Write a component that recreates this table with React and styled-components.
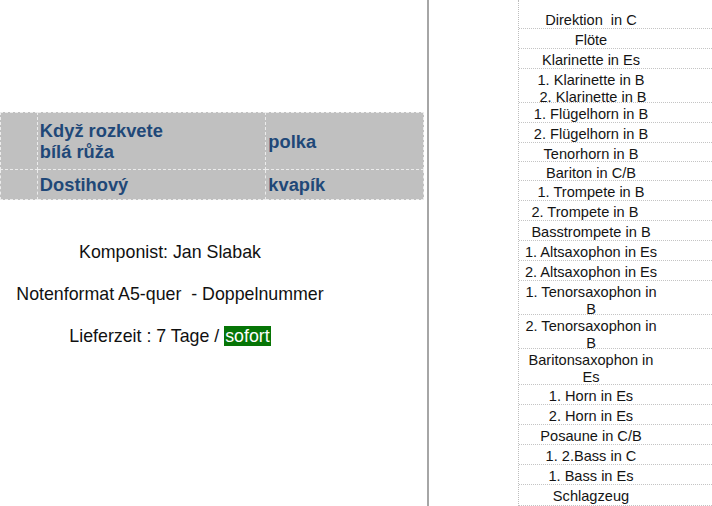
import React from 'react';
import styled, { createGlobalStyle } from 'styled-components';

const Global = createGlobalStyle`
  html, body {
    margin: 0;
    padding: 0;
    background: #fff;
    overflow: hidden;
  }
  body {
    font-family: "Liberation Sans", Arial, sans-serif;
  }
`;

const Page = styled.div`
  display: flex;
  width: 712px;
  height: 506px;
  overflow: hidden;
`;

const LeftPanel = styled.div`
  width: 427px;
  flex-shrink: 0;
  padding-top: 112px;
  box-sizing: border-box;
`;

const Divider = styled.div`
  width: 2px;
  flex-shrink: 0;
  background: #a6a6a6;
`;

const RightPanel = styled.div`
  flex: 1;
  padding-left: 89px;
  box-sizing: border-box;
`;

const SongTable = styled.table`
  width: 424px;
  border-collapse: collapse;
  background: #c0c0c0;
  border: 1px dotted #9a9a9a;
`;

const Cell = styled.td`
  width: ${p => p.w}px;
  height: ${p => p.h}px;
  padding: 0 0 0 2px;
  border: 1px dashed #ececec;
  color: #1f4878;
  font-weight: bold;
  font-size: 18.3px;
  line-height: 21px;
  vertical-align: middle;
  box-sizing: border-box;
`;

const Info = styled.div`
  width: 340px;
  text-align: center;
  padding-top: 42px;
`;

const Line = styled.p`
  margin: 0 0 21px;
  font-size: 17.8px;
  line-height: 21px;
  color: #111;
`;

const Badge = styled.span`
  background: #067506;
  color: #fff;
  padding: 0 1px;
`;

const PartList = styled.div`
  border-left: 1px dotted #bdbdbd;
  height: 100%;
`;

const PartRow = styled.div`
  display: grid;
  grid-template-columns: 144px 1fr;
  height: ${p => p.h}px;
  padding-top: ${p => (p.top || 0) + 3}px;
  border-bottom: 1px dotted #c4c4c4;
  box-sizing: border-box;
`;

const PartName = styled.div`
  text-align: center;
  font-size: 14.6px;
  line-height: 17px;
  color: #141414;
  align-self: center;
  white-space: pre;
`;

const parts = [
  { t: 'Direktion  in C', h: 29, top: 9 },
  { t: 'Flöte', h: 20 },
  { t: 'Klarinette in Es', h: 20 },
  { t: '1. Klarinette in B\n 2. Klarinette in B', h: 34 },
  { t: '1. Flügelhorn in B', h: 20 },
  { t: '2. Flügelhorn in B', h: 20 },
  { t: 'Tenorhorn in B', h: 19 },
  { t: 'Bariton in C/B', h: 19 },
  { t: '1. Trompete in B', h: 20 },
  { t: '2. Trompete in B   ', h: 20 },
  { t: 'Basstrompete in B', h: 20 },
  { t: '1. Altsaxophon in Es', h: 20 },
  { t: '2. Altsaxophon in Es', h: 20 },
  { t: '1. Tenorsaxophon in\nB', h: 34 },
  { t: '2. Tenorsaxophon in\nB', h: 34 },
  { t: 'Baritonsaxophon in\nEs', h: 36 },
  { t: '1. Horn in Es', h: 20 },
  { t: '2. Horn in Es', h: 20 },
  { t: 'Posaune in C/B', h: 20 },
  { t: '1. 2.Bass in C', h: 20 },
  { t: '1. Bass in Es', h: 20 },
  { t: 'Schlagzeug', h: 21 },
];

export default function App() {
  return (
    <Page>
      <Global />
      <LeftPanel>
        <SongTable>
          <tbody>
            <tr>
              <Cell w={37} h={57}></Cell>
              <Cell w={229} h={57}>Když rozkvete<br />bílá růža</Cell>
              <Cell w={158} h={57}>polka</Cell>
            </tr>
            <tr>
              <Cell w={37} h={30}></Cell>
              <Cell w={229} h={30}>Dostihový</Cell>
              <Cell w={158} h={30}>kvapík</Cell>
            </tr>
          </tbody>
        </SongTable>
        <Info>
          <Line>Komponist: Jan Slabak</Line>
          <Line>Notenformat A5-quer&nbsp; - Doppelnummer</Line>
          <Line>Lieferzeit : 7 Tage / <Badge>sofort</Badge></Line>
        </Info>
      </LeftPanel>
      <Divider />
      <RightPanel>
        <PartList>
          {parts.map((p, i) => (
            <PartRow key={i} h={p.h} top={p.top}>
              <PartName>{p.t}</PartName>
              <span />
            </PartRow>
          ))}
        </PartList>
      </RightPanel>
    </Page>
  );
}
